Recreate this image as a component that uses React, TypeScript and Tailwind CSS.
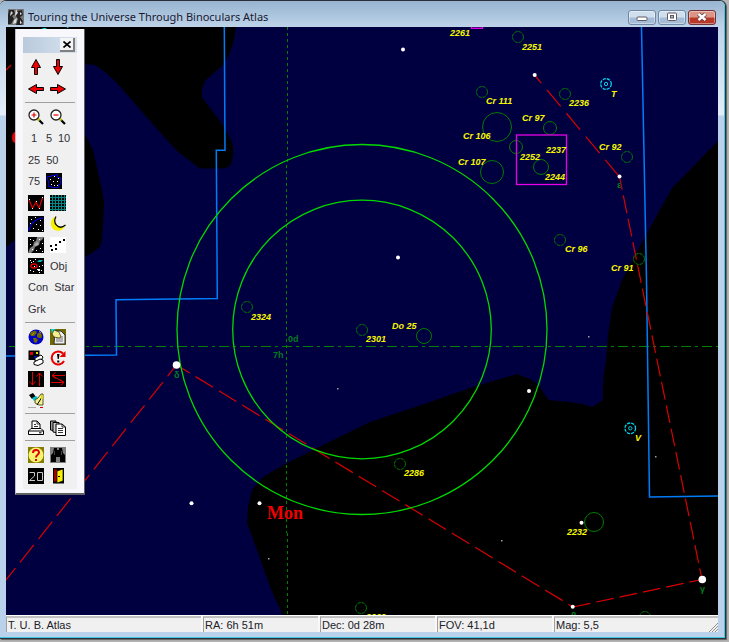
import type { ReactNode } from "react";

type Point = [number, number];

const labels: [string, number, number][] = [
  ["2261", 450, 36],
  ["2251", 522, 50],
  ["Cr 111", 486, 104],
  ["2236", 569, 106],
  ["T", 611, 97],
  ["Cr 97", 522, 121],
  ["Cr 106", 463, 139],
  ["Cr 107", 458, 165],
  ["2252", 520, 160],
  ["2237", 546, 153],
  ["2244", 545, 180],
  ["Cr 92", 599, 150],
  ["Cr 96", 565, 252],
  ["Cr 91", 611, 271],
  ["2324", 251, 320],
  ["2301", 366, 342],
  ["Do 25", 392, 329],
  ["2286", 404, 476],
  ["2232", 567, 535],
  ["V", 635, 441],
  ["2269", 366, 620],
];

const greek: [string, number, number][] = [
  ["0d", 288, 342],
  ["7h", 273, 358],
  ["ε", 617, 188],
  ["δ", 174, 378],
  ["γ", 700, 592],
  ["β", 571, 619],
];

// x, y, radius
const clusters: [number, number, number][] = [
  [518, 37, 5],
  [482, 92, 5],
  [565, 94, 5],
  [497, 127, 14],
  [550, 128, 6],
  [516, 147, 6],
  [492, 172, 11],
  [541, 167, 7],
  [627, 157, 5],
  [560, 240, 5],
  [639, 259, 5],
  [247, 307, 5],
  [362, 330, 5],
  [424, 336, 7],
  [400, 464, 5],
  [361, 608, 5],
  [594, 522, 9],
  [645, 617, 5],
];

const stars: [number, number, number][] = [
  [403, 49.5, 2],
  [534.7, 75, 2],
  [619.5, 176.5, 2],
  [398, 257.5, 2],
  [529, 391, 2],
  [191.5, 503.3, 2],
  [259.5, 503.3, 2],
  [581.5, 522.7, 2],
  [572.7, 606.7, 2],
  [176.5, 365, 3.8],
  [702.3, 579.5, 3.8],
];

const faintStars: Point[] = [
  [338, 388],
  [502, 540],
  [269, 558],
  [656, 456],
  [589, 336],
];

const variables: Point[] = [
  [606, 84],
  [630.3, 428.3],
];

function Chart() {
  return (
    <svg
      viewBox="6 27 712 588"
      preserveAspectRatio="xMidYMid slice"
      className="absolute inset-0 h-full w-full"
      role="img"
      aria-label="Star chart"
    >
      <rect x="6" y="27" width="712" height="588" fill="#000040" />

      {/* gaps in the Milky Way */}
      <path d="M6 27H236L234 40L229 55L223 65L215 72L205 81L202 89L202 97L210 108L220 121L226 130L233 145L233 155L231 165L225 168.500H200L190 161L177 151L165 138L150 121L130 98L116 82L105 72L95 65L84 64L60 100L84 133L88 140L93 150L98 172L102 190L104 202L103 225L102 240L100 247L92 253L84 257L50 248L30 235L16 239L6 247Z" />
      <path d="M718 141L672 188L647 233L622 280L612 308L608 335L606 360L603 380L603 400L592 407L582 404L570 402L549 400L545 395L540 387L532 380L517 374L473 387L427 403L370 422L317 448L287 463L263 477L252 490L248 507L247 523L257 550L272 592L283 615H718Z" />

      {/* coordinate grid */}
      <g stroke="#008000" fill="none" shapeRendering="crispEdges">
        <path d="M9 346.500H718" strokeDasharray="10 4 3 4" />
        <path d="M287.500 27V165" strokeDasharray="3 3" />
        <path d="M286.500 165V533" strokeDasharray="3 3" />
        <path d="M287.500 533V615" strokeDasharray="3 3" />
      </g>

      {/* constellation borders */}
      <g stroke="#007cf8" strokeWidth="1.500" fill="none">
        <path d="M224.300 27L225 150.300H216.300L217.300 298.500L116 299.800L116.500 355L6 356" />
        <path d="M641.500 27L646.500 280L649.500 497L718 496" />
      </g>

      {/* constellation lines */}
      <g stroke="#d80000" strokeWidth="1.200" fill="none">
        <path d="M176.500 365L573 607" strokeDasharray="20.500 6.800" strokeDashoffset="5" />
        <path d="M176.500 365L6 580" strokeDasharray="22.300 7.400" strokeDashoffset="8" />
        <path d="M573 607L702 579.500" strokeDasharray="17.800 6" />
        <path d="M619.500 177L702 579.500" strokeDasharray="18 5.800" strokeDashoffset="5" />
        <path d="M534.500 75L619.500 177" strokeDasharray="21.500 8.900" strokeDashoffset="11" />
        <path d="M6 70L11 65" />
      </g>

      <g stroke="#007c00" fill="none">
        {clusters.map(([x, y, r]) => (
          <circle key={`${x}-${y}`} cx={x} cy={y} r={r + 0.5} strokeDasharray={r < 6 ? "3.400 .9" : undefined} />
        ))}
      </g>

      <g stroke="#e800e8" strokeWidth="1.300" fill="none">
        <rect x="516.500" y="135" width="50" height="49.500" />
        <rect x="471.500" y="18" width="11" height="10.300" />
      </g>

      {/* binocular fields */}
      <g stroke="#00d800" strokeWidth="1.300" fill="none">
        <circle cx="362" cy="329.500" r="185" />
        <circle cx="362" cy="329.500" r="129.300" />
      </g>

      <g stroke="#00d0e8" fill="none">
        {variables.map(([x, y]) => (
          <g key={x}>
            <circle cx={x} cy={y} r="5.300" strokeWidth="1.300" strokeDasharray="3.200 1" />
            <circle cx={x} cy={y} r="1.700" />
          </g>
        ))}
      </g>

      <g fill="#fff">
        {stars.map(([x, y, r]) => (
          <circle key={`${x}-${y}`} cx={x} cy={y} r={r} />
        ))}
      </g>
      <g fill="#a0a0a0">
        {faintStars.map(([x, y]) => (
          <rect key={x} x={x - 1} y={y} width="1.500" height="1.500" />
        ))}
      </g>

      <g className="font-['Liberation_Sans',sans-serif] text-[9px] font-bold" fill="#007c20">
        {greek.map(([text, x, y]) => (
          <text key={text} x={x} y={y}>{text}</text>
        ))}
      </g>
      <g className="font-['Liberation_Sans',sans-serif] text-[9px] font-bold italic" fill="#f8f800">
        {labels.map(([text, x, y]) => (
          <text key={text} x={x} y={y}>{text}</text>
        ))}
      </g>
      <text x="41" y="34" fill="#00e0e0" className="font-['Liberation_Sans',sans-serif] text-[9px] font-bold">
        Gomeisa
      </text>
      <g className="font-['Liberation_Serif',serif] text-[18px] font-bold" fill="#f00000">
        <text x="267" y="519">Mon</text>
        <text x="11" y="144">C</text>
      </g>
    </svg>
  );
}

function Icon({ children }: { children: ReactNode }) {
  return (
    <svg viewBox="0 0 16 16" className="block h-4 w-4" aria-hidden="true">
      {children}
    </svg>
  );
}

function Dots({ d, color = "#fff" }: { d: Point[]; color?: string }) {
  return (
    <>
      {d.map(([x, y]) => (
        <rect key={`${x}-${y}`} x={x} y={y} width="1" height="1" fill={color} />
      ))}
    </>
  );
}

function Arrow({ turn }: { turn: number }) {
  return (
    <Icon>
      <path
        d="M8 .5L12.500 8.500H9.500V15.500H6.500V8.500H3.500Z"
        fill="#f00000"
        stroke="#000"
        transform={`rotate(${turn} 8 8)`}
      />
    </Icon>
  );
}

function Magnifier({ plus }: { plus?: boolean }) {
  return (
    <Icon>
      <path d="M10 10L15 15" stroke="#000" strokeWidth="2.200" />
      <path d="M9.500 9.500L11.500 11.500" stroke="#d8d000" strokeWidth="2" />
      <circle cx="6" cy="6" r="5" fill="#fff" stroke="#222" strokeWidth="1.300" />
      <path d={plus ? "M3.500 6H8.500M6 3.500V8.500" : "M3.500 6H8.500"} stroke="#e00000" strokeWidth="1.200" />
    </Icon>
  );
}

const black = <rect width="16" height="16" />;

const icons: Record<string, ReactNode> = {
  up: <Arrow turn={0} />,
  down: <Arrow turn={180} />,
  left: <Arrow turn={270} />,
  right: <Arrow turn={90} />,
  zoomIn: <Magnifier plus />,
  zoomOut: <Magnifier />,
  borders: (
    <Icon>
      {black}
      <path d="M2.500 13.500V7.500H1.500V3.500H5.500V2.500H9.500V1.500H11.500V4.500H14.500V11.500H12.500V14.500H5.500V13.500Z" fill="none" stroke="#0000d0" />
      <Dots d={[[8, 3], [4, 6], [7, 8], [11, 8], [5, 11], [8, 12], [11, 12], [12, 5]]} />
    </Icon>
  ),
  lines: (
    <Icon>
      {black}
      <path d="M1 5L4.500 13L8 7L11 13L14.500 3" fill="none" stroke="#e00000" strokeWidth="1.200" />
      <Dots d={[[1, 4], [8, 6], [14, 2], [4, 13], [11, 13]]} />
    </Icon>
  ),
  grid: (
    <Icon>
      {black}
      <path d="M2.500 0V16M5.500 0V16M8.500 0V16M11.500 0V16M14.500 0V16M0 2.500H16M0 5.500H16M0 8.500H16M0 11.500H16M0 14.500H16" stroke="#008888" />
    </Icon>
  ),
  ecliptic: (
    <Icon>
      {black}
      <path d="M1 15C2 8 7 3 15 2" fill="none" stroke="#0000e0" strokeWidth="1.200" />
      <Dots d={[[3, 3], [7, 1], [12, 4], [8, 8], [5, 12], [12, 9], [10, 13], [14, 14], [2, 7]]} />
    </Icon>
  ),
  moon: (
    <Icon>
      <path d="M6 .5C1 2 -.5 7 2 11.500C5 16.500 13 16 15.500 9C12.500 12 9 11.500 7 9C5 6.500 5 3 6 .5Z" fill="#f4f000" />
      <path d="M6 .5C4 4 4.500 7 6.500 9.200C9 12 12.500 11.500 15.500 9" fill="none" stroke="#000" strokeWidth="1.200" />
    </Icon>
  ),
  milkyWay: (
    <Icon>
      {black}
      <path d="M9 0H16L14 3L12 4L11 8L7 10L6 13L3 16H0L2 11L5 9L6 5L8 4Z" fill="#808080" />
      <path d="M9 5L11 7L8 9L6 8Z" fill="#b0b0b0" />
      <Dots d={[[2, 2], [5, 3], [11, 2], [14, 6], [12, 11], [2, 7], [8, 13], [14, 14], [4, 12]]} />
    </Icon>
  ),
  magnitude: (
    <Icon>
      <rect width="16" height="16" fill="#fff" />
      <path d="M0 8H2V10H0ZM1 12H3V14H1ZM5 11H7V13H5ZM5 7H7V9H5ZM9 4H11V6H9ZM13 2H15V4H13Z" />
    </Icon>
  ),
  deepSky: (
    <Icon>
      {black}
      <ellipse cx="6" cy="8" rx="3" ry="2" fill="none" stroke="#e00000" strokeWidth="1.300" />
      <path d="M9 4L11 2H15L13 4Z" fill="#00b8b8" />
      <Dots d={[[2, 2], [5, 3], [11, 8], [14, 7], [2, 12], [5, 13], [9, 11], [13, 12], [11, 14], [7, 1], [6, 8]]} />
      <path d="M10 11H12V13H10ZM3 4H4V5H3Z" fill="#fff" />
    </Icon>
  ),
  globe: (
    <Icon>
      <circle cx="8" cy="8" r="7.500" fill="#0000c8" />
      <path d="M3 3L7 1.500L9 3L8 5L6 7L3 7L2 5ZM9 5L12 3L14 6L13.500 9L11 9L9 8ZM5 9L8 9L10 11L8 14L6 13Z" fill="#706800" />
      <path d="M11 2L13 4M4 6L6 4" stroke="#a89800" />
    </Icon>
  ),
  edit: (
    <Icon>
      <rect width="16" height="16" fill="#706800" />
      <path d="M5 2H11L15 6V15H4Z" fill="#eee" stroke="#333" />
      <path d="M6 8H13M6 10H13M6 12H13" stroke="#777" />
      <path d="M1 0H5L6 4L2 5Z" fill="#00d8e0" />
      <path d="M4 1L9 3L11 8L9 9L4 8L2 5Z" fill="#f4ee90" stroke="#302c00" strokeWidth=".7" />
    </Icon>
  ),
  objects: (
    <Icon>
      <rect x=".5" y=".5" width="11" height="9.500" />
      <rect x="2" y="2" width="3" height="3" fill="#e00000" />
      <path d="M6 6H10V9H6Z" fill="#0000e0" />
      <path d="M8 2H10V4H8Z" fill="#e8e000" />
      <path d="M7 8L13 5L15 7L14 9L10 11L7 11Z" fill="#fff" stroke="#000" />
      <path d="M6 12L12 9L15 10V13L10 15.500L6 14.500Z" fill="#fff" stroke="#000" />
    </Icon>
  ),
  refresh: (
    <Icon>
      <path d="M13 3.500A6.500 6.500 0 1 0 14 11" fill="none" stroke="#e80000" strokeWidth="2" />
      <path d="M15.500 1V7H9.500Z" fill="#e80000" />
      <path d="M7 4H9.500L8.800 9H7.700ZM7.200 10.500H9.300V12.500H7.200Z" />
    </Icon>
  ),
  flipV: (
    <Icon>
      {black}
      <path d="M4.500 1V14M1.500 10.500L4.500 14L7.500 10.500M11.500 15V2M8.500 5.500L11.500 2L14.500 5.500" fill="none" stroke="#e00000" />
    </Icon>
  ),
  flipH: (
    <Icon>
      {black}
      <path d="M15 4.500H2M5.500 1.500L2 4.500L5.500 7.500M2 4.500L14 11.500M1 11.500H14M10.500 8.500L14 11.500L10.500 14.500" fill="none" stroke="#e00000" />
    </Icon>
  ),
  hand: (
    <Icon>
      <path d="M1 2L5 0L8 4L4 6Z" />
      <path d="M4 5L8 3L10 5L6 8Z" fill="#00c0c8" />
      <path d="M7 7L10 5L13 1H15V12L11 12L7 10Z" fill="#f4f090" stroke="#383400" strokeWidth=".8" />
      <path d="M9 12L14 4" stroke="#000" />
      <path d="M13 2H15V6H13Z" fill="#e0d800" />
      <path d="M0 14.500H8" stroke="#aaa" />
      <path d="M12 14.500H15" stroke="#d00000" />
    </Icon>
  ),
  print: (
    <Icon>
      <path d="M4 9V1H9L12 4V9" fill="#fff" stroke="#000" />
      <path d="M9 1V4H12M6 4.500H8M6 6.500H10" fill="none" stroke="#000" strokeWidth=".8" />
      <path d="M3 8.500H13L15.500 11V14.500H.5V11Z" fill="#fff" stroke="#000" />
      <path d="M.5 11H15.500M11 12.800H13.500" stroke="#000" />
    </Icon>
  ),
  pages: (
    <Icon>
      <path d="M.5 1H6V11L.5 10Z" fill="#999" stroke="#000" />
      <path d="M3 2.500H9V13L3 12Z" fill="#ccc" stroke="#000" />
      <path d="M6 4H12L15.500 7V15.500H6Z" fill="#fff" stroke="#000" />
      <path d="M12 4V7H15.500M8 8.500H13M8 10.500H13M8 12.500H13" fill="none" stroke="#000" strokeWidth=".8" />
    </Icon>
  ),
  help: (
    <Icon>
      <rect width="16" height="16" fill="#887c00" />
      <circle cx="8" cy="8" r="7.500" fill="#f8f470" />
      <path d="M5 6C5 2 11 2 11 5.500C11 8 8 7.500 8 10.500M8 12V14" fill="none" stroke="#e00000" strokeWidth="2" />
    </Icon>
  ),
  binoculars: (
    <Icon>
      <rect width="16" height="16" fill="#808080" />
      <path d="M4 1H7V3H9V1H12L13 6L15 8V15H10V10H6V15H1V8L3 6Z" />
      <path d="M4.500 4V8M11.500 4V8" stroke="#444" />
    </Icon>
  ),
  twenty: (
    <Icon>
      {black}
      <path d="M1.500 4.500H6.500V8L1.500 12.500H7M9.500 4.500H14.500V12.500H9.500Z" fill="none" stroke="#c8c8c8" />
    </Icon>
  ),
  exit: (
    <Icon>
      <rect x="3" y="0" width="11" height="15.500" />
      <rect x="4" y="1.500" width="3" height="12" fill="#a00000" />
      <path d="M7 3L13 1V13L7 15Z" fill="#f4f000" stroke="#000" strokeWidth=".7" />
      <rect x="8" y="8" width="2" height="1" />
    </Icon>
  ),
};

type Tool = { icon?: string; text?: string; title: string };
type ToolRow = { height: string; gap: string; tools: Tool[] };

const tool = (icon: string, title: string): Tool => ({ icon, title });
const word = (text: string, title: string): Tool => ({ text, title });

const short = "h-[21px]";
const tall = "h-[22px]";

const groups: ToolRow[][] = [
  [
    { height: tall, gap: "gap-1.5", tools: [tool("up", "Move up"), tool("down", "Move down")] },
    { height: tall, gap: "gap-1.5", tools: [tool("left", "Move left"), tool("right", "Move right")] },
  ],
  [
    { height: short, gap: "gap-1.5", tools: [tool("zoomIn", "Zoom in"), tool("zoomOut", "Zoom out")] },
    {
      height: tall,
      gap: "gap-[3px]",
      tools: [word("1", "Field 1 degree"), word("5", "Field 5 degrees"), word("10", "Field 10 degrees")],
    },
    { height: short, gap: "gap-1.5", tools: [word("25", "Field 25 degrees"), word("50", "Field 50 degrees")] },
    { height: tall, gap: "gap-1.5", tools: [word("75", "Field 75 degrees"), tool("borders", "Borders")] },
    { height: short, gap: "gap-1.5", tools: [tool("lines", "Constellation lines"), tool("grid", "Grid")] },
    { height: short, gap: "gap-1.5", tools: [tool("ecliptic", "Ecliptic"), tool("moon", "Moon")] },
    { height: short, gap: "gap-1.5", tools: [tool("milkyWay", "Milky Way"), tool("magnitude", "Magnitudes")] },
    { height: short, gap: "gap-1.5", tools: [tool("deepSky", "Deep sky"), word("Obj", "Object labels")] },
    { height: tall, gap: "gap-1.5", tools: [word("Con", "Constellation names"), word("Star", "Star names")] },
    { height: tall, gap: "gap-1.5", tools: [word("Grk", "Greek letters")] },
  ],
  [
    { height: short, gap: "gap-1.5", tools: [tool("globe", "Location"), tool("edit", "Edit")] },
    { height: short, gap: "gap-1.5", tools: [tool("objects", "Objects"), tool("refresh", "Refresh")] },
    { height: tall, gap: "gap-1.5", tools: [tool("flipV", "Flip vertically"), tool("flipH", "Flip horizontally")] },
    { height: short, gap: "gap-1.5", tools: [tool("hand", "Notes")] },
  ],
  [{ height: short, gap: "gap-1.5", tools: [tool("print", "Print"), tool("pages", "Pages")] }],
  [
    { height: short, gap: "gap-1.5", tools: [tool("help", "Help"), tool("binoculars", "Binoculars")] },
    { height: tall, gap: "gap-1.5", tools: [tool("twenty", "Top 20"), tool("exit", "Exit")] },
  ],
];

function Palette() {
  return (
    <div className="absolute top-0.5 left-[9px] border-r border-b-2 border-l border-[#606060] border-l-[#c0c0c8] bg-[#f8f8fc] px-[7px] pt-2 pb-1">
      <div className="w-[54px] bg-[#f0f0f0] pb-0.5">
        <div className="flex h-4 items-center justify-end bg-linear-to-r from-[#b9cadc] to-[#d8e3f0] pr-0.5">
          <button
            aria-label="Close toolbar"
            className="flex h-[14px] w-[15px] items-center justify-center border-r-2 border-b-2 border-[#808080] bg-[#f4f4f4]"
          >
            <svg viewBox="0 0 8 7" className="h-[7px] w-2" aria-hidden="true">
              <path d="M.5 .5L7.500 6.500M7.500 .5L.5 6.500" stroke="#000" strokeWidth="1.600" />
            </svg>
          </button>
        </div>
        <div className="flex flex-col pt-[3px]">
          {groups.map((rows, i) => (
            <div
              key={i}
              className="mx-0.5 border-t border-[#a0a0a0] pt-[3px] pb-0.5 pl-[3px] first:border-0 first:pt-0 last:pb-0"
            >
              {rows.map((row) => (
                <div key={row.tools[0].title} className={`flex items-center ${row.height} ${row.gap}`}>
                  {row.tools.map((t) => (
                    <button
                      key={t.title}
                      aria-label={t.title}
                      className="min-w-3 font-['Liberation_Sans',sans-serif] text-[11px] leading-4 text-[#303038]"
                    >
                      {t.icon ? icons[t.icon] : t.text}
                    </button>
                  ))}
                </div>
              ))}
            </div>
          ))}
        </div>
      </div>
    </div>
  );
}

const controls = [
  { label: "Minimize", style: "bg-linear-to-b from-[#d0dfee] from-45% to-[#a4bcd6] to-55% border-[#7088a4]" },
  { label: "Maximize", style: "bg-linear-to-b from-[#d0dfee] from-45% to-[#a4bcd6] to-55% border-[#7088a4]" },
  { label: "Close", style: "bg-linear-to-b from-[#dc9484] from-45% to-[#b83828] to-55% border-[#703038]" },
];

function TitleBar() {
  return (
    <header className="flex h-[26px] items-center rounded-t-md bg-linear-to-b from-[#98b4d0] to-[#bdd3e9] px-2 pt-1.5">
      <svg viewBox="0 0 16 16" className="h-4 w-4 shrink-0" aria-hidden="true">
        <rect width="16" height="16" fill="#777" />
        <path d="M1 1H6L7 5L4 7L6 10L3 15H0V6ZM9 2L14 1L15 6L12 8L15 12L14 16H8L10 10L8 7Z" fill="#222" />
        <path d="M3 2L5 4L2 7ZM8 0L10 4L7 7ZM6 11L9 9L8 14L5 15ZM12 3L14 5L12 6ZM12 11L14 14L12 15Z" fill="#ddd" />
      </svg>
      <h1 className="ml-1 flex-1 truncate font-['Noto_Sans',sans-serif] text-[11px] leading-4 text-[#181830]">
        Touring the Universe Through Binoculars Atlas
      </h1>
      <div className="flex gap-0.5">
        {controls.map(({ label, style }) => (
          <button
            key={label}
            aria-label={label}
            className={`flex h-[15px] w-7 items-center justify-center rounded-[3px] border ring-1 ring-white/40 ring-inset ${style}`}
          >
            <svg viewBox="0 0 14 12" className="h-3 w-[14px]" aria-hidden="true">
              {label === "Minimize" && (
                <rect x="2" y="6" width="10" height="3.500" rx="1" fill="#fff" stroke="#605860" />
              )}
              {label === "Maximize" && (
                <>
                  <rect x="2.500" y="2" width="9" height="7.500" rx="1" fill="#fff" stroke="#605860" />
                  <rect x="5.500" y="4.500" width="3" height="2.500" fill="#a0b8d0" stroke="#605860" />
                </>
              )}
              {label === "Close" && (
                <>
                  <path d="M3.500 3L10.500 9M10.500 3L3.500 9" stroke="#604048" strokeWidth="4" />
                  <path d="M3.500 3L10.500 9M10.500 3L3.500 9" stroke="#fff" strokeWidth="2.400" />
                </>
              )}
            </svg>
          </button>
        ))}
      </div>
    </header>
  );
}

const status = ["T. U. B. Atlas", "RA: 6h 51m", "Dec: 0d 28m", "FOV: 41,1d", "Mag: 5,5"];

function StatusBar() {
  return (
    <footer className="relative grid h-[17px] grid-cols-[197fr_117fr_117fr_117fr_164fr] border-t border-white bg-[#f8f8f8]">
      {status.map((text) => (
        <div
          key={text}
          className="mr-0.5 truncate border-t-2 border-l border-t-[#c0c0c0] border-l-[#a0a0a0] bg-[#f0f0f0] pl-px font-['Liberation_Sans',sans-serif] text-[11px] leading-[14px] text-[#202028] last-of-type:mr-0"
        >
          {text}
        </div>
      ))}
      <svg viewBox="0 0 9 9" className="absolute right-0 bottom-0 h-[9px] w-[9px]" aria-hidden="true">
        <path d="M0 9L9 0M3 9L9 3M6 9L9 6" stroke="#909090" />
      </svg>
    </footer>
  );
}

export default function App() {
  return (
    <div className="flex min-h-screen bg-[#b4b4b4] pr-[3px] pb-[3px]">
      <div className="flex min-w-0 flex-1 flex-col rounded-t-md border-t border-r border-b border-[#283038] bg-[#b9d1ea] shadow-[1px_1px_1px_#606060]">
        <div className="flex flex-1 flex-col rounded-tr-md border-r border-b border-[#40c8e0]">
          <TitleBar />
          <div className="flex flex-1 flex-col bg-[linear-gradient(#bdd3e9,#e2edf7_88px,#b9d1ea_89px)] px-1.5 pb-[5px]">
            <main className="relative flex-1 overflow-hidden">
              <Chart />
              <Palette />
            </main>
            <StatusBar />
          </div>
        </div>
      </div>
    </div>
  );
}
